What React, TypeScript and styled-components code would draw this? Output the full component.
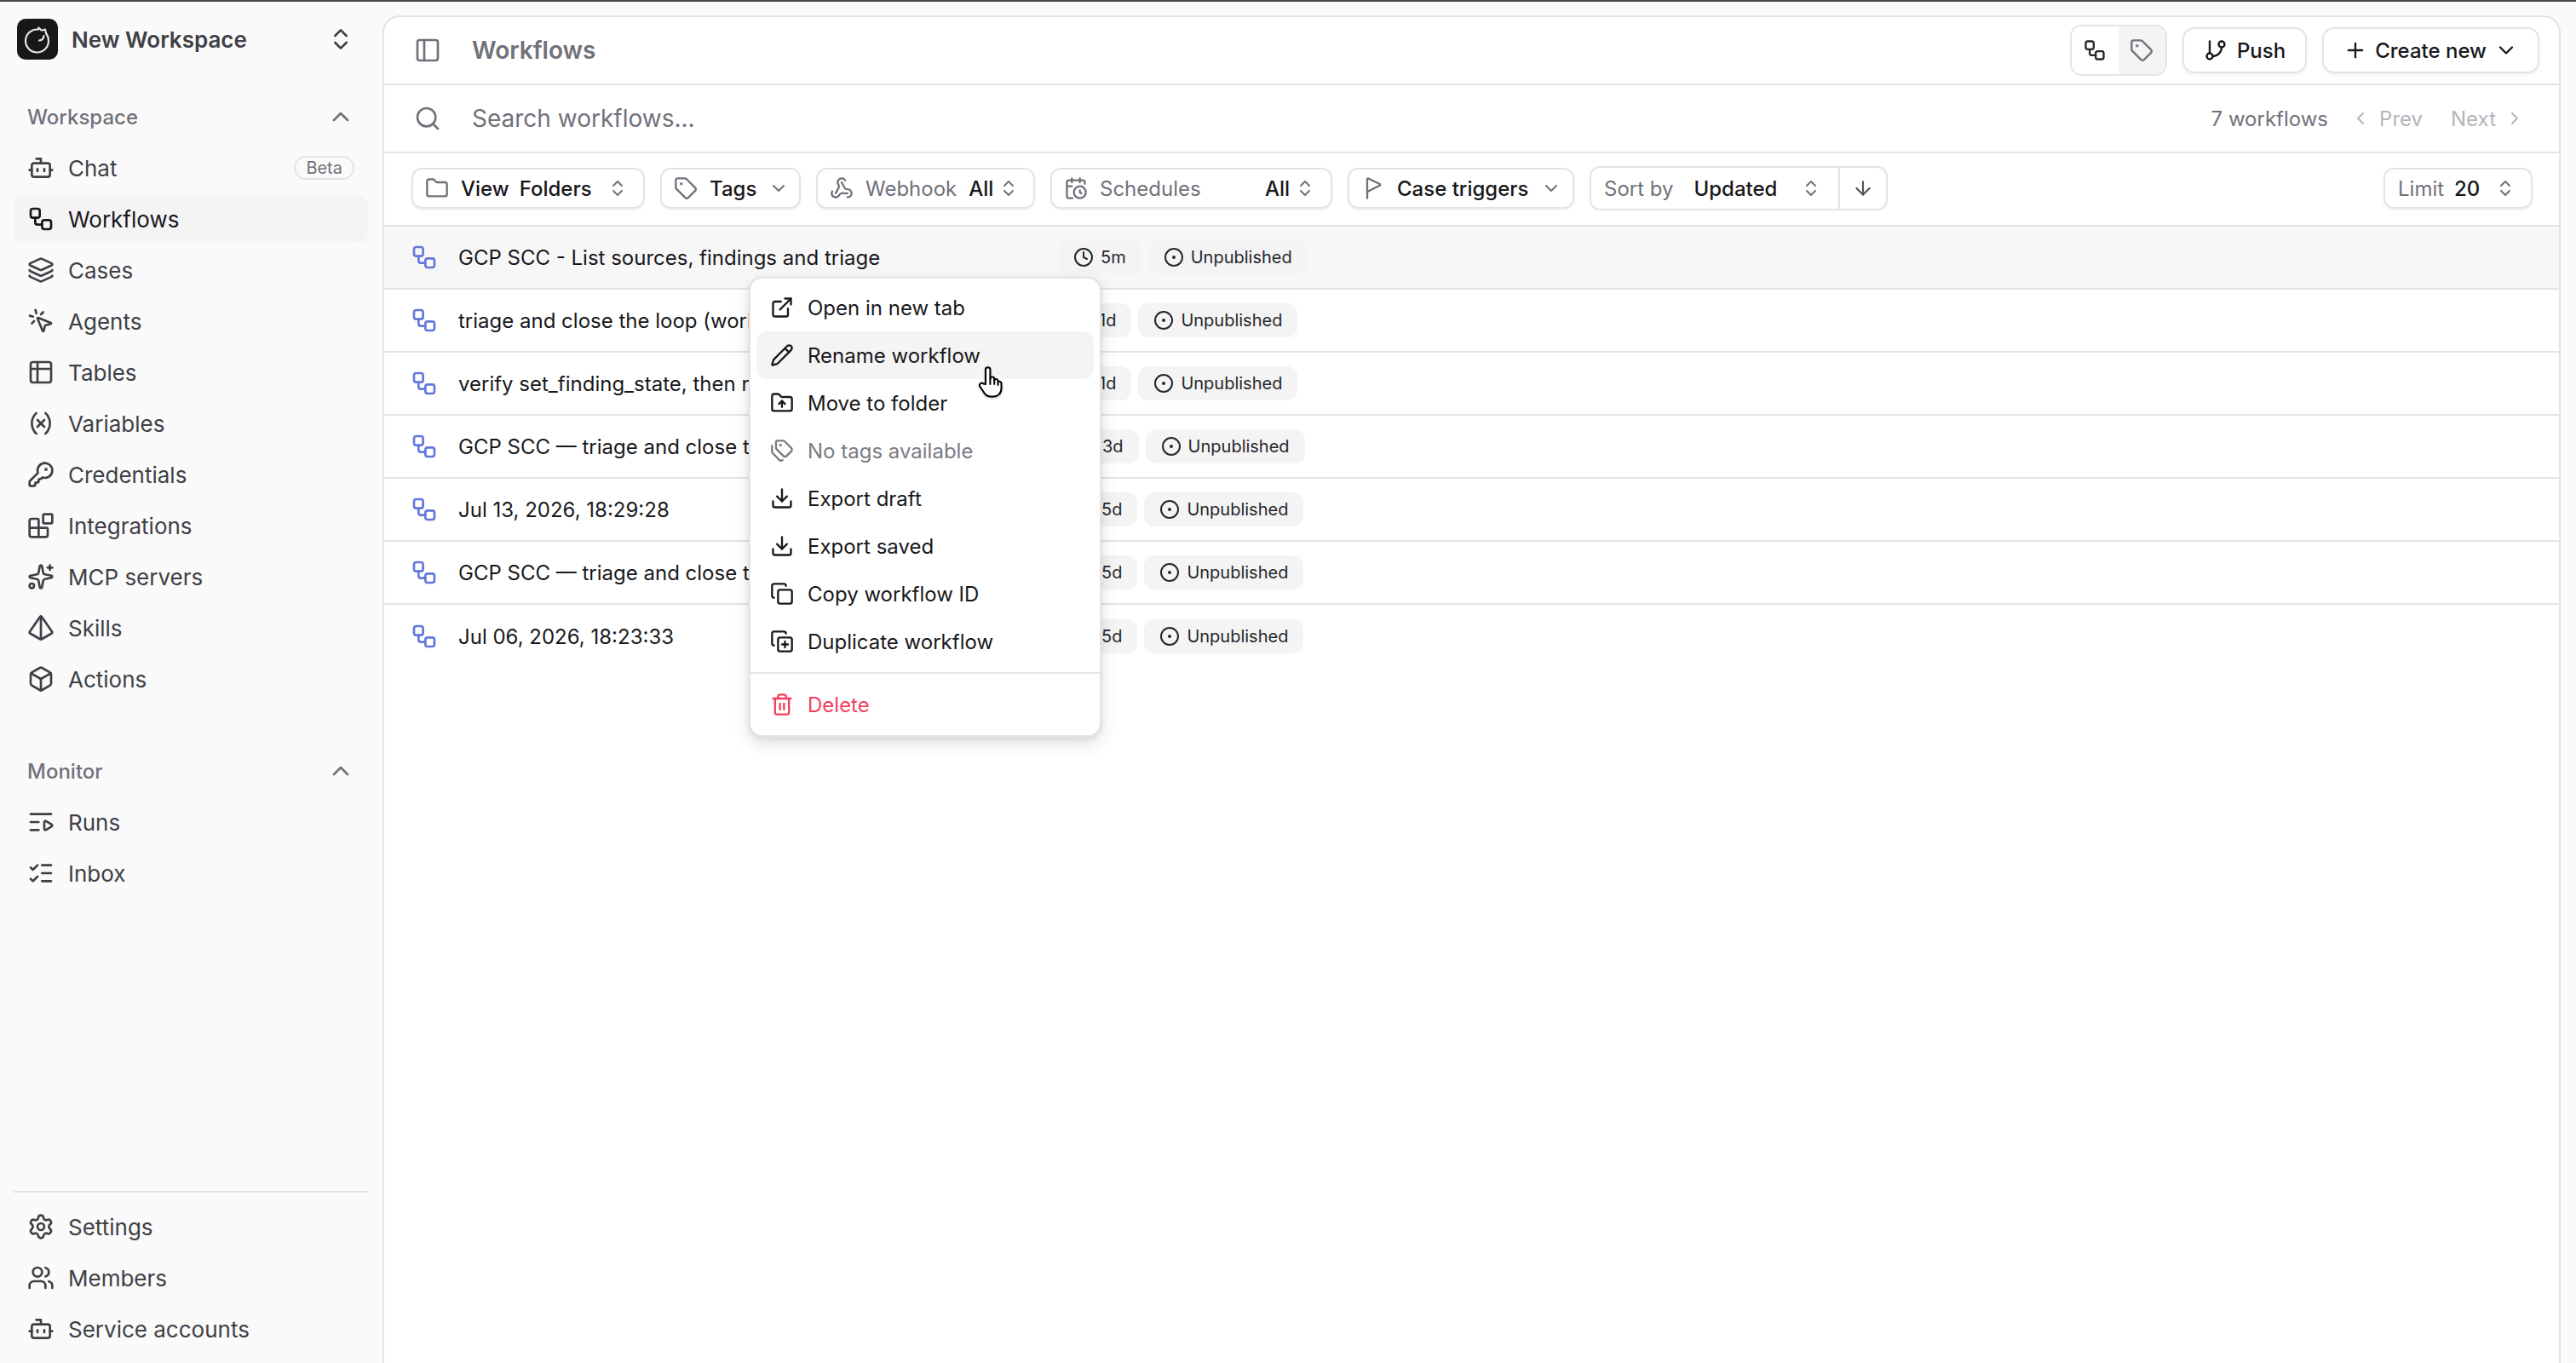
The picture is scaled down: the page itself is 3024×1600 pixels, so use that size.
import React from 'react'
import styled, { createGlobalStyle } from 'styled-components'
import {
  ArrowDown, Blocks, Bot, Box, CalendarClock, ChevronDown, ChevronLeft, ChevronRight, ChevronUp,
  ChevronsUpDown, CircleDot, Clock, Copy, CopyPlus, Download, ExternalLink, FlagTriangleRight,
  Folder, FolderUp, GitBranch, KeyRound, Layers, ListChecks, ListVideo, MousePointerClick, PanelLeft,
  Pencil, Plus, Pyramid, Search, Settings, Sparkles, Table2, Tag, Tags, Trash2, Users,
  Variable, Webhook, Workflow,
} from 'lucide-react'

const GlobalStyle = createGlobalStyle`
  html, body {
    margin: 0;
    height: 100%;
    overflow: hidden;
    background: #fafafa;
    font-family: Inter, "Liberation Sans", sans-serif;
    color: #18181b;
  }
  * { box-sizing: border-box; }
  svg { flex-shrink: 0; }
`

const workspaceNav = [
  { label: 'Chat', icon: Bot, beta: true },
  { label: 'Workflows', icon: Workflow, active: true },
  { label: 'Cases', icon: Layers },
  { label: 'Agents', icon: MousePointerClick },
  { label: 'Tables', icon: Table2 },
  { label: 'Variables', icon: Variable },
  { label: 'Credentials', icon: KeyRound },
  { label: 'Integrations', icon: Blocks },
  { label: 'MCP servers', icon: Sparkles },
  { label: 'Skills', icon: Pyramid },
  { label: 'Actions', icon: Box },
]
const monitorNav = [
  { label: 'Runs', icon: ListVideo },
  { label: 'Inbox', icon: ListChecks },
]
const footerNav = [
  { label: 'Settings', icon: Settings },
  { label: 'Members', icon: Users },
  { label: 'Service accounts', icon: Bot },
]

const rows = [
  { title: 'GCP SCC - List sources, findings and triage', age: '5m', width: 704, hover: true },
  { title: 'triage and close the loop (workflow test)', age: '1d', width: 702 },
  { title: 'verify set_finding_state, then re-run triage', age: '1d', width: 702 },
  { title: 'GCP SCC — triage and close the loop', age: '3d', width: 706 },
  { title: 'Jul 13, 2026, 18:29:28', age: '5d', width: 705 },
  { title: 'GCP SCC — triage and close the loop', age: '5d', width: 705 },
  { title: 'Jul 06, 2026, 18:23:33', age: '5d', width: 705 },
]

const menuItems = [
  { label: 'Open in new tab', icon: ExternalLink },
  { label: 'Rename workflow', icon: Pencil, hover: true },
  { label: 'Move to folder', icon: FolderUp },
  { label: 'No tags available', icon: Tags, muted: true },
  { label: 'Export draft', icon: Download },
  { label: 'Export saved', icon: Download },
  { label: 'Copy workflow ID', icon: Copy },
  { label: 'Duplicate workflow', icon: CopyPlus },
]

const NavList = ({ items }: { items: any[] }) => (
  <>
    {items.map(item => (
      <NavItem key={item.label} $active={item.active}>
        <item.icon size={32} strokeWidth={2} />
        <span>{item.label}</span>
        {item.beta && <BetaBadge>Beta</BetaBadge>}
      </NavItem>
    ))}
  </>
)

const App = () => (
  <>
    <GlobalStyle />
    <TopLine />
    <Layout>
      <Sidebar>
        <WorkspaceHeader>
          <LogoMark viewBox="0 0 48 48">
            <rect width="48" height="48" rx="10" fill="#18181b" />
            <path d="M25 12.6A13.5 13.5 0 1 0 37 26c0-3.4-1.2-6.6-3-9l-1-4.5-4 1.2-3.6-3.2z" />
            <path d="M26 25.5c3 0 5-2 5.5-5.5" />
          </LogoMark>
          <WorkspaceName>New Workspace</WorkspaceName>
          <HeaderChevron><ChevronsUpDown size={32} strokeWidth={2} /></HeaderChevron>
        </WorkspaceHeader>

        <SectionLabel $first>
          Workspace
          <ChevronUp size={32} strokeWidth={2} />
        </SectionLabel>
        <NavList items={workspaceNav} />

        <SectionLabel>
          Monitor
          <ChevronUp size={32} strokeWidth={2} />
        </SectionLabel>
        <NavList items={monitorNav} />

        <SidebarFooter>
          <NavList items={footerNav} />
        </SidebarFooter>
      </Sidebar>

      <Panel>
        <PanelHeader>
          <PanelLeft size={32} strokeWidth={2} color="#71717a" />
          <PanelTitle>Workflows</PanelTitle>
          <ViewToggle>
            <ToggleSlot><Workflow size={28} strokeWidth={2} color="#27272a" /></ToggleSlot>
            <ToggleSlot $selected><Tag size={28} strokeWidth={2} color="#71717a" /></ToggleSlot>
          </ViewToggle>
          <HeaderButton $gap={11}>
            <GitBranch size={28} strokeWidth={2} />
            Push
          </HeaderButton>
          <HeaderButton $gap={9}>
            <Plus size={28} strokeWidth={2} />
            Create new
            <ChevronDown size={28} strokeWidth={2} />
          </HeaderButton>
        </PanelHeader>

        <SearchRow>
          <Search size={32} strokeWidth={2} color="#71717a" />
          <SearchText>Search workflows...</SearchText>
          <CountText>7 workflows</CountText>
          <PagerGroup>
            <Pager>
              <ChevronLeft size={24} strokeWidth={2} />
              Prev
            </Pager>
            <Pager>
              Next
              <ChevronRight size={24} strokeWidth={2} />
            </Pager>
          </PagerGroup>
        </SearchRow>

        <FilterRow>
          <Filter $width={274}>
            <Folder size={28} strokeWidth={2} color="#71717a" />
            <FilterValue>View</FilterValue>
            <FilterValue $tight>Folders</FilterValue>
            <FilterEnd><ChevronsUpDown size={24} strokeWidth={2} /></FilterEnd>
          </Filter>
          <Filter $width={165}>
            <Tag size={28} strokeWidth={2} color="#71717a" />
            <FilterValue>Tags</FilterValue>
            <FilterEnd $inset={2}><ChevronDown size={24} strokeWidth={2} /></FilterEnd>
          </Filter>
          <Filter $width={257}>
            <Webhook size={28} strokeWidth={2} color="#71717a" />
            <FilterName>Webhook</FilterName>
            <FilterEnd>
              <FilterValue>All</FilterValue>
              <ChevronsUpDown size={24} strokeWidth={2} />
            </FilterEnd>
          </Filter>
          <Filter $width={331}>
            <CalendarClock size={28} strokeWidth={2} color="#71717a" />
            <FilterName>Schedules</FilterName>
            <FilterEnd>
              <FilterValue>All</FilterValue>
              <ChevronsUpDown size={24} strokeWidth={2} />
            </FilterEnd>
          </Filter>
          <Filter $width={266}>
            <FlagTriangleRight size={28} strokeWidth={2} color="#71717a" />
            <FilterValue>Case triggers</FilterValue>
            <FilterEnd $inset={4}><ChevronDown size={24} strokeWidth={2} /></FilterEnd>
          </Filter>
          <SortGroup>
            <SortSelect>
              <FilterName>Sort by</FilterName>
              <FilterValue>Updated</FilterValue>
              <FilterEnd><ChevronsUpDown size={24} strokeWidth={2} /></FilterEnd>
            </SortSelect>
            <SortDirection><ArrowDown size={26} strokeWidth={2} /></SortDirection>
          </SortGroup>
          <LimitFilter>
            <FilterName>Limit</FilterName>
            <FilterValue>20</FilterValue>
            <FilterEnd><ChevronsUpDown size={24} strokeWidth={2} /></FilterEnd>
          </LimitFilter>
        </FilterRow>

        {rows.map((row, i) => (
          <Row key={i} $hover={row.hover} $last={i === rows.length - 1}>
            <Workflow size={32} strokeWidth={2} color="#6478dc" />
            <RowTitle $width={row.width}>{row.title}</RowTitle>
            <RowBadge>
              <Clock size={24} strokeWidth={2} />
              {row.age}
            </RowBadge>
            <RowBadge>
              <CircleDot size={24} strokeWidth={2} />
              Unpublished
            </RowBadge>
          </Row>
        ))}

        <Menu>
          {menuItems.map(item => (
            <MenuItem key={item.label} $hover={item.hover} $muted={item.muted}>
              <item.icon size={28} strokeWidth={2} />
              {item.label}
              {item.hover && (
                <HandCursor viewBox="0 0 30 38">
                  <path d="M9 4a2.7 2.7 0 0 1 5.4 0v11a2.4 2.4 0 0 1 4.8 0v1.5a2.3 2.3 0 0 1 4.4.6v1.5a2.2 2.2 0 0 1 3.9 1.2v6c0 6-4 9.7-9.5 9.7h-2.5c-3.6 0-6-1.4-8-4.2l-5-7.5a2.6 2.6 0 0 1 4-3.3L9 21z" />
                  <path d="M14.4 15v6M19.2 16v5M23.6 18v4" />
                </HandCursor>
              )}
            </MenuItem>
          ))}
          <MenuDivider />
          <MenuItem $danger>
            <Trash2 size={28} strokeWidth={2} />
            Delete
          </MenuItem>
        </Menu>
      </Panel>
    </Layout>
  </>
)

const TopLine = styled.div`
  height: 2px;
  background: #444;
`

const Layout = styled.div`
  display: flex;
  height: calc(100vh - 2px);
`

const Sidebar = styled.aside`
  width: 449px;
  flex-shrink: 0;
  display: flex;
  flex-direction: column;
  gap: 4px;
  padding: 20px 17px 12px 16px;
`

const WorkspaceHeader = styled.div`
  display: flex;
  align-items: center;
  height: 48px;
  padding-left: 4px;
`

const LogoMark = styled.svg`
  width: 48px;
  height: 48px;
  fill: none;
  stroke: #e4e4e7;
  stroke-width: 2.2;
  stroke-linecap: round;
  stroke-linejoin: round;
  & rect { stroke: none; }
`

const WorkspaceName = styled.div`
  margin-left: 16px;
  font-size: 26px;
  font-weight: 600;
  color: #3f3f46;
`

const HeaderChevron = styled.div`
  margin-left: auto;
  margin-right: 16px;
  display: flex;
  color: #3f3f46;
`

const SectionLabel = styled.div<{ $first?: boolean }>`
  display: flex;
  align-items: center;
  justify-content: space-between;
  height: 48px;
  margin-top: ${p => (p.$first ? '39px' : '52px')};
  margin-bottom: 4px;
  padding: 0 16px;
  font-size: 24px;
  font-weight: 500;
  color: #71717a;
  & svg { color: #71717a; }
`

const NavItem = styled.div<{ $active?: boolean }>`
  display: flex;
  align-items: center;
  gap: 16px;
  height: 56px;
  flex-shrink: 0;
  padding: 0 16px;
  border-radius: 12px;
  font-size: 26px;
  color: ${p => (p.$active ? '#18181b' : '#3f3f46')};
  background: ${p => (p.$active ? '#f4f4f5' : 'transparent')};
`

const BetaBadge = styled.span`
  margin-left: auto;
  padding: 0 12px;
  border: 2px solid #e4e4e7;
  border-radius: 999px;
  font-size: 20px;
  line-height: 24px;
  color: #71717a;
`

const SidebarFooter = styled.div`
  margin-top: auto;
  padding-top: 12px;
  border-top: 2px solid #e4e4e7;
  display: flex;
  flex-direction: column;
  gap: 4px;
`

const Panel = styled.main`
  position: relative;
  flex: none;
  width: 2557px;
  margin-top: 16px;
  background: #fff;
  border: 2px solid #e4e4e7;
  border-bottom: none;
  border-radius: 20px 20px 0 0;
`

const PanelHeader = styled.div`
  display: flex;
  align-items: center;
  height: 80px;
  padding: 0 23px 0 35px;
  border-bottom: 2px solid #e4e4e7;
`

const PanelTitle = styled.div`
  margin-left: 36px;
  margin-right: auto;
  font-size: 28px;
  font-weight: 600;
  color: #71717a;
`

const ViewToggle = styled.div`
  display: flex;
  height: 60px;
  border: 2px solid #e4e4e7;
  border-radius: 14px;
  overflow: hidden;
`

const ToggleSlot = styled.div<{ $selected?: boolean }>`
  display: flex;
  align-items: center;
  justify-content: center;
  width: 55px;
  background: ${p => (p.$selected ? '#f4f4f5' : '#fff')};
`

const HeaderButton = styled.button<{ $gap: number }>`
  display: flex;
  align-items: center;
  gap: ${p => p.$gap}px;
  height: 54px;
  margin-left: 18px;
  padding: 0 23px;
  background: #fff;
  border: 2px solid #e4e4e7;
  border-radius: 14px;
  box-shadow: 0 2px 4px rgba(0, 0, 0, 0.06);
  font-family: inherit;
  font-size: 24px;
  font-weight: 500;
  color: #18181b;
`

const SearchRow = styled.div`
  display: flex;
  align-items: center;
  height: 80px;
  padding: 0 40px 0 35px;
  border-bottom: 2px solid #e4e4e7;
  font-size: 24px;
`

const SearchText = styled.div`
  margin-left: 36px;
  margin-right: auto;
  font-size: 28px;
  color: #71717a;
`

const CountText = styled.div`
  color: #71717a;
`

const PagerGroup = styled.div`
  display: flex;
  gap: 33px;
  margin-left: 26px;
`

const Pager = styled.div`
  display: flex;
  align-items: center;
  gap: 10px;
  color: #b4b4bb;
`

const FilterRow = styled.div`
  display: flex;
  align-items: center;
  gap: 18px;
  height: 86px;
  padding: 0 31px 2px 32px;
  border-bottom: 2px solid #e4e4e7;
`

const Filter = styled.div<{ $width: number }>`
  display: flex;
  align-items: center;
  gap: 14px;
  width: ${p => p.$width}px;
  height: 48px;
  padding: 0 18px 0 14px;
  background: #fff;
  border: 2px solid #e4e4e7;
  border-radius: 12px;
  box-shadow: 0 2px 3px rgba(0, 0, 0, 0.05);
  font-size: 24px;
  white-space: nowrap;
`

const FilterName = styled.span`
  color: #71717a;
`

const FilterValue = styled.span<{ $tight?: boolean }>`
  margin-left: ${p => (p.$tight ? '-2px' : '0')};
  color: #18181b;
  font-weight: 500;
`

const FilterEnd = styled.span<{ $inset?: number }>`
  display: flex;
  align-items: center;
  gap: 6px;
  margin-left: auto;
  margin-right: ${p => p.$inset ?? 0}px;
  color: #71717a;
`

const SortGroup = styled.div`
  display: flex;
  width: 350px;
  height: 52px;
  background: #fff;
  border: 2px solid #e4e4e7;
  border-radius: 12px;
  font-size: 24px;
  white-space: nowrap;
`

const SortSelect = styled.div`
  display: flex;
  align-items: center;
  gap: 24px;
  flex: 1;
  padding: 0 20px 0 15px;
  border-right: 2px solid #e4e4e7;
`

const SortDirection = styled.div`
  display: flex;
  align-items: center;
  justify-content: center;
  width: 54px;
  color: #52525b;
`

const LimitFilter = styled(Filter).attrs({ $width: 175 })`
  margin-left: auto;
  padding-left: 15px;
  gap: 12px;
`

const Row = styled.div<{ $hover?: boolean; $last?: boolean }>`
  display: flex;
  align-items: center;
  height: 74px;
  padding-left: 31px;
  border-bottom: ${p => (p.$last ? 'none' : '2px solid #e4e4e7')};
  background: ${p => (p.$hover ? '#f7f7f8' : '#fff')};
`

const RowTitle = styled.div<{ $width: number }>`
  width: ${p => p.$width}px;
  margin-left: 24px;
  overflow: hidden;
  white-space: nowrap;
  font-size: 24px;
  color: #18181b;
`

const RowBadge = styled.div`
  display: flex;
  align-items: center;
  gap: 8px;
  height: 40px;
  margin-right: 8px;
  padding: 0 18px;
  border-radius: 12px;
  background: #f4f4f5;
  font-size: 20px;
  color: #27272a;
`

const Menu = styled.div`
  position: absolute;
  left: 428px;
  top: 305px;
  width: 414px;
  padding: 6px 7px 8px;
  background: #fff;
  border: 2px solid #e4e4e7;
  border-radius: 16px;
  box-shadow: 0 8px 20px rgba(0, 0, 0, 0.12), 0 2px 6px rgba(0, 0, 0, 0.08);
`

const MenuItem = styled.div<{ $hover?: boolean; $muted?: boolean; $danger?: boolean }>`
  position: relative;
  display: flex;
  align-items: center;
  gap: 16px;
  height: 56px;
  padding: 0 16px;
  border-radius: 12px;
  font-size: 24px;
  background: ${p => (p.$hover ? '#f4f4f5' : 'transparent')};
  color: ${p => (p.$danger ? '#f43f5e' : p.$muted ? '#7b7b83' : '#18181b')};
`

const HandCursor = styled.svg`
  position: absolute;
  left: 260px;
  top: 41px;
  width: 30px;
  height: 38px;
  overflow: visible;
  fill: #fff;
  stroke: #000;
  stroke-width: 2;
  stroke-linecap: round;
  stroke-linejoin: round;
  filter: drop-shadow(0 1px 1px rgba(0, 0, 0, 0.35));
`

const MenuDivider = styled.div`
  height: 2px;
  margin: 8px -7px;
  background: #e4e4e7;
`

export default App
